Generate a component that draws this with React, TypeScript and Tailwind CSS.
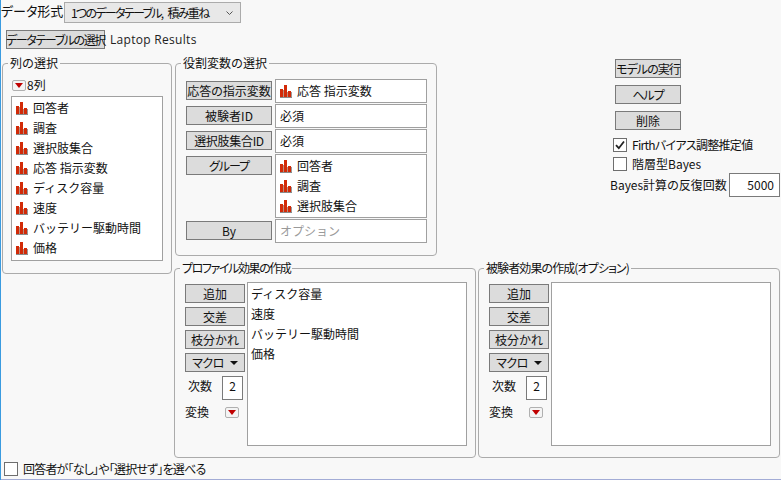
import type { ReactNode } from "react";

const font = { fontFamily: '"Noto Sans CJK JP", sans-serif' };

const columns = ["回答者", "調査", "選択肢集合", "応答 指示変数", "ディスク容量", "速度", "バッテリー駆動時間", "価格"];
const attributes = ["ディスク容量", "速度", "バッテリー駆動時間", "価格"];

const NominalIcon = () => (
  <svg width="12" height="13" viewBox="0 0 12 13" className="shrink-0">
    <rect x="0" y="4" width="3" height="8" fill="#d22a08" />
    <rect x="4" y="0" width="3" height="12" fill="#d22a08" />
    <rect x="8" y="6" width="3" height="6" fill="#d22a08" />
    <rect x="3" y="5" width="1" height="7" fill="#b89080" />
    <rect x="7" y="7" width="1" height="5" fill="#b89080" />
    <rect x="11" y="7" width="1" height="5" fill="#9a9a9a" />
    <rect x="0" y="12" width="12" height="1" fill="#8a8a8a" />
  </svg>
);

const RedMenu = () => (
  <div className="w-[14px] h-[11px] bg-[#f4f4f4] border border-[#b0b0b0] rounded-[2px] flex items-center justify-center">
    <svg width="8" height="5" viewBox="0 0 8 5">
      <path d="M0 0H8L4 5Z" fill="#c00000" />
    </svg>
  </div>
);

const Btn = ({ children, className = "" }: { children: ReactNode; className?: string }) => (
  <div className={`h-[19px] bg-[#dcdcdc] border border-[#7a7a7a] flex items-center justify-center text-[12px] leading-none whitespace-nowrap text-[#111] [font-feature-settings:'palt'] ${className}`}>
    {children}
  </div>
);

const Check = ({ checked = false }: { checked?: boolean }) => (
  <div className="w-[14px] h-[14px] bg-white border border-[#6e6e6e] flex items-center justify-center shrink-0">
    {checked && (
      <svg width="10" height="10" viewBox="0 0 10 10">
        <path d="M1 5.2L3.8 8.2L9 1.5" fill="none" stroke="#222" strokeWidth="1.8" />
      </svg>
    )}
  </div>
);

const IconRow = ({ label }: { label: string }) => (
  <div className="h-[20px] flex items-center gap-[5px] pl-[4px] text-[12px] whitespace-nowrap text-[#111]">
    <NominalIcon />
    {label}
  </div>
);

const RoleRow = ({ label, children, tall = false, btnClass = "" }: { label: string; children: ReactNode; tall?: boolean; btnClass?: string }) => (
  <div className="flex">
    <Btn className={`w-[86px] mt-[2px] mr-[3px] ${btnClass}`}>{label}</Btn>
    <div className={`w-[152px] bg-white border border-[#a0a0a0] ${tall ? "h-[64px]" : "h-[24px]"} flex flex-col justify-center text-[12px]`}>
      {children}
    </div>
  </div>
);

const EffectPanel = ({ title, titleClass, items }: { title: string; titleClass: string; items: string[] }) => (
  <fieldset className="w-[302px] h-[198px] border border-[#ababab] rounded-[4px] pl-[10px]">
    <legend className={`-ml-[5px] px-[2px] text-[12px] leading-[16px] text-[#111] [font-feature-settings:'palt'] ${titleClass}`}>{title}</legend>
    <div className="flex gap-[2px] pt-[6px]">
      <div className="w-[60px] pt-[2px] flex flex-col gap-[4px]">
        <Btn className="w-[60px]">追加</Btn>
        <Btn className="w-[60px]">交差</Btn>
        <Btn className="w-[60px] [font-feature-settings:normal]">枝分かれ</Btn>
        <Btn className="w-[60px] gap-[6px] tracking-[-0.5px]">
          マクロ
          <svg width="8" height="4" viewBox="0 0 8 4">
            <path d="M0 0H8L4 4Z" fill="#111" />
          </svg>
        </Btn>
        <div className="flex items-start h-[24px] text-[12px] text-[#111]">
          <span className="pl-[3px] w-[37px] leading-[20px]">次数</span>
          <div className="w-[21px] h-[24px] bg-white border border-[#7a7a7a] flex justify-center leading-[18px]">2</div>
        </div>
        <div className="flex items-center text-[12px] text-[#111] -mt-[1px]">
          <span className="w-[40px] leading-[18px]">変換</span>
          <RedMenu />
        </div>
      </div>
      <div className="w-[220px] h-[164px] bg-white border border-[#a0a0a0] pl-[3px] pt-[1px] text-[12px] text-[#111]">
        {items.map((item) => (
          <div key={item} className="h-[20px] leading-[20px] whitespace-nowrap">{item}</div>
        ))}
      </div>
    </div>
  </fieldset>
);

export default function App() {
  return (
    <div style={font} className="w-[781px] h-[480px] overflow-hidden bg-[#f8f8f8] border-l border-[#3a9be0] flex flex-col text-[12px] text-[#111]">
      {/* top rows */}
      <div className="flex items-center h-[21px] mt-[2px]">
        <span className="w-[63px] text-[13px] whitespace-nowrap -mt-[4px] [font-feature-settings:'palt']">データ形式</span>
        <div className="w-[177px] h-[21px] bg-[#e8e8e8] border border-[#ababab] flex items-center justify-between pl-[6px] pr-[7px]">
          <span className="whitespace-nowrap tracking-[-1.7px] [word-spacing:4px] [font-feature-settings:'palt']">1つのデータテーブル, 積み重ね</span>
          <svg width="7" height="4" viewBox="0 0 7 4">
            <path d="M0.5 0.5L3.5 3.5L6.5 0.5" fill="none" stroke="#555" />
          </svg>
        </div>
      </div>
      <div className="flex items-center h-[19px] mt-[7px] pl-[5px]">
        <Btn className="w-[99px] bg-[#d8d8d8] tracking-[-1.4px]">データテーブルの選択</Btn>
        <span className="ml-[5px] text-[#222] tracking-[0.3px]" style={{ fontFamily: '"Open Sans", sans-serif' }}>Laptop Results</span>
      </div>

      {/* main */}
      <div className="flex mt-[6px] pl-[1px]">
        <fieldset className="w-[170px] h-[219px] border border-[#ababab] rounded-[4px] pl-[8px]">
          <legend className="-ml-[3px] px-[2px] text-[12px] leading-[16px]">列の選択</legend>
          <div className="flex items-center h-[16px] pl-[1px] mt-[6px]">
            <RedMenu />
            <span className="ml-[1px]">8列</span>
          </div>
          <div className="w-[152px] h-[165px] mt-[3px] bg-white border border-[#a0a0a0] pt-[1px]">
            {columns.map((c) => (
              <IconRow key={c} label={c} />
            ))}
          </div>
        </fieldset>

        <div className="flex flex-col ml-[2px]">
          <div className="flex">
            <fieldset className="w-[262px] h-[201px] ml-[1px] border border-[#ababab] rounded-[4px] pl-[10px]">
              <legend className="-ml-[5px] px-[2px] text-[12px] leading-[16px]">役割変数の選択</legend>
              <div className="flex flex-col gap-[1px] pt-[8px]">
                <RoleRow label="応答の指示変数"><IconRow label="応答 指示変数" /></RoleRow>
                <RoleRow label="被験者ID"><span className="pl-[4px]">必須</span></RoleRow>
                <RoleRow label="選択肢集合ID" btnClass="tracking-[-0.3px]"><span className="pl-[4px]">必須</span></RoleRow>
                <RoleRow label="グループ" tall btnClass="tracking-[-1px]">
                  <IconRow label="回答者" />
                  <IconRow label="調査" />
                  <IconRow label="選択肢集合" />
                </RoleRow>
                <RoleRow label="By"><span className="pl-[4px] text-[#9a9a9a]">オプション</span></RoleRow>
              </div>
            </fieldset>

            <div className="flex flex-col ml-[172px] pt-[4px]">
              <div className="flex flex-col gap-[7px] pl-[6px]">
                <Btn className="w-[66px] tracking-[-1px]">モデルの実行</Btn>
                <Btn className="w-[66px] tracking-[-1px]">ヘルプ</Btn>
                <Btn className="w-[66px]">削除</Btn>
              </div>
              <div className="flex items-center gap-[5px] pl-[4px] mt-[8px] h-[14px] whitespace-nowrap tracking-[-0.7px] [font-feature-settings:'palt']">
                <Check checked />
                Firthバイアス調整推定値
              </div>
              <div className="flex items-center gap-[5px] pl-[4px] mt-[5px] h-[14px] whitespace-nowrap [font-feature-settings:'palt']">
                <Check />
                階層型Bayes
              </div>
              <div className="flex items-center mt-[2px] whitespace-nowrap [font-feature-settings:'palt']">
                <span className="w-[120px] pl-[1px]">Bayes計算の反復回数</span>
                <div className="w-[51px] h-[24px] bg-white border border-[#7a7a7a] flex items-center justify-end pr-[5px]">5000</div>
              </div>
            </div>
          </div>

          <div className="flex gap-[2px] mt-[4px]">
            <EffectPanel title="プロファイル効果の作成" titleClass="tracking-[-1.4px]" items={attributes} />
            <EffectPanel title="被験者効果の作成(オプション)" titleClass="tracking-[-0.9px]" items={[]} />
          </div>
        </div>
      </div>

      {/* footer */}
      <div className="flex items-center gap-[5px] pl-[3px] h-[14px] mt-auto mb-[3px] tracking-[-0.8px] [font-feature-settings:'palt']">
        <Check />
        回答者が「なし」や「選択せず」を選べる
      </div>
      <div className="h-[1px] bg-[#a3acd6] shrink-0 -ml-[1px]" />
    </div>
  );
}
